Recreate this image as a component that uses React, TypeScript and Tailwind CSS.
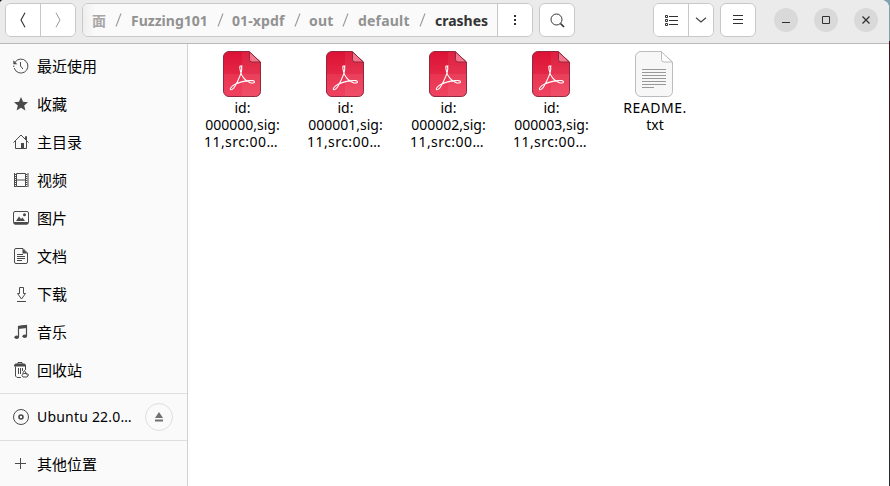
import type { ReactNode } from "react";

const button = "flex items-center justify-center bg-white text-[#3d3d3d]";
const group = "flex h-[34px] shrink-0 overflow-hidden rounded-[6px] border border-[#c8c8c8] bg-white box-border";

function Icon({ children, className = "" }: { children: ReactNode; className?: string }) {
  return (
    <svg viewBox="0 0 16 16" width="16" height="16" fill="none" stroke="#4a4a4a" strokeWidth="1" className={`shrink-0 ${className}`}>
      {children}
    </svg>
  );
}

const places: { label: string; icon: ReactNode }[] = [
  {
    label: "最近使用",
    icon: (
      <>
        <path d="M2.100 4.200A7 7 0 1 1 1.200 10M.8 9V7.600M7.500 4v4l2.400 3" />
        <path d="M.3 2.200v4h4z" fill="#4a4a4a" stroke="none" />
      </>
    ),
  },
  {
    label: "收藏",
    icon: <path d="M8 1l2 4.800 5 .4-3.800 3.300 1.200 5L8 11.800l-4.400 2.700 1.200-5L1 6.200l5-.4z" fill="#4a4a4a" stroke="none" />,
  },
  {
    label: "主目录",
    icon: (
      <>
        <path d="M.5 8.600L8 1l7.500 7.600M2.500 7v7.500H8M10.500 14.500h3V7M12.500 5V2.500h1V6" />
        <path d="M8 9h3v6H8z" fill="#4a4a4a" stroke="none" />
      </>
    ),
  },
  {
    label: "视频",
    icon: (
      <>
        <path d="M3.500 1.500h9v13h-9zM3.500 8h9" />
        <path d="M2.500 2v13M13.500 2v13" strokeWidth="1.500" strokeDasharray="1 1" />
        <path d="M1.500 1v14M15 1v14" />
      </>
    ),
  },
  {
    label: "图片",
    icon: (
      <>
        <rect x=".5" y="1.500" width="15" height="12.500" rx="1.500" />
        <path d="M1 12h14v1.500l-1 1H2l-1-1zM3 11l3-4.500 2 2.500 1.500-1.500L12 11z" fill="#4a4a4a" stroke="none" />
        <circle cx="11.500" cy="4.700" r="1.500" fill="#4a4a4a" stroke="none" />
      </>
    ),
  },
  {
    label: "文档",
    icon: (
      <>
        <path d="M3 .5h7l4.500 4.500v9a1.500 1.500 0 0 1-1.500 1.500H3A1.500 1.500 0 0 1 1.500 14V2A1.500 1.500 0 0 1 3 .5zM4 6.500h6M4 8.500h8M4 10.500h8M4 12.500h5" />
        <path d="M9.500.5l5 5h-5z" fill="#4a4a4a" stroke="none" />
      </>
    ),
  },
  { label: "下载", icon: <path d="M6.500 1.500h4v6h2L8.500 13l-4-5.500h2zM4 15.500h9" /> },
  {
    label: "音乐",
    icon: (
      <>
        <path d="M5.500 13V2.500l8-1V12" strokeWidth="1.200" />
        <path d="M5 2l9-1v3L5 5z" fill="#4a4a4a" stroke="none" />
        <ellipse cx="3.700" cy="13.200" rx="2.300" ry="1.800" fill="#4a4a4a" stroke="none" />
        <ellipse cx="11.700" cy="12.300" rx="2.300" ry="1.800" fill="#4a4a4a" stroke="none" />
      </>
    ),
  },
  {
    label: "回收站",
    icon: (
      <>
        <path d="M2.500 4.500V14l1.500 1.500h4M5.500 6v6M7.500 6v6M9.500 6v3M12.500 4v4M5 2V.5h4V2" />
        <path d="M1 4.500V3l1.500-1.500h9L13 3v1.500z" fill="#4a4a4a" stroke="none" />
        <path d="M9.500 11.500l2-3 3 5M13.500 11.500h-3l-1.500 2 1 1.500h4l1.500-2-1-1.500" />
      </>
    ),
  },
];

const crumbs = [
  { label: "Fuzzing101", box: "w-[77px]", gap: "w-[24px]", text: "tracking-[0px]" },
  { label: "01-xpdf", box: "w-[53px]", gap: "w-[24px]", text: "tracking-[0.1px]" },
  { label: "out", box: "w-[24px]", gap: "w-[25px]", text: "tracking-[0.2px]" },
  { label: "default", box: "w-[52px]", gap: "w-[25px]", text: "tracking-[0.2px]" },
];

function Slash({ width }: { width: string }) {
  return (
    <span className={`flex shrink-0 justify-center ${width}`}>
      <svg width="7" height="14" viewBox="0 0 7 14" stroke="#999" strokeWidth="1.100"><path d="M6 .5L1 13.500" /></svg>
    </span>
  );
}

function PdfIcon() {
  return (
    <svg width="40" height="48" viewBox="0 0 40 48" className="shrink-0">
      <defs>
        <linearGradient id="pdf" x2="0" y2="1"><stop stopColor="#dc1235" /><stop offset=".5" stopColor="#e42645" /><stop offset=".51" stopColor="#e83450" /><stop offset="1" stopColor="#f04361" /></linearGradient>
      </defs>
      <path d="M7 1.500h20L38.500 12v29.500a5 5 0 0 1-5 5H7a5.500 5.500 0 0 1-5.500-5.500V7A5.500 5.500 0 0 1 7 1.500z" fill="url(#pdf)" />
      <path d="M20 1.500h7L38.500 12v29.500a5 5 0 0 1-5 5H20z" fill="#fff" fillOpacity=".06" />
      <path d="M7 1.500h20L38.500 12v29.500a5 5 0 0 1-5 5H7a5.500 5.500 0 0 1-5.500-5.500V7A5.500 5.500 0 0 1 7 1.500z" fill="none" stroke="#90283e" />
      <path d="M27.500 1.800L38.200 12H30a2.500 2.500 0 0 1-2.500-2.500z" fill="#f5768c" stroke="#90283e" />
      <path d="M20.500 16h-2.200c-1 0-.2 3.500.2 5.500.8 4.500 5 9.500 9.200 11 2.500 1 4.800.5 4.800-.5 0-1.500-2.500-1.600-5-1.400-5 .4-11 1.600-15.500 4.300-2.500 1.500-4.200 3.800-3.600 4.600.8 1 3.200-.8 4.700-3.500 2.500-4.500 6.600-13.500 6.700-17.500 0-1.300-.4-2.500-1.300-2.500" fill="none" stroke="white" strokeWidth="1.100" />
    </svg>
  );
}

function TextIcon() {
  return (
    <svg width="40" height="48" viewBox="0 0 40 48" className="shrink-0">
      <path d="M7 1.500h20L38.500 12v29.500a5 5 0 0 1-5 5H7a5.500 5.500 0 0 1-5.500-5.500V7A5.500 5.500 0 0 1 7 1.500z" fill="#f7f7f7" stroke="#bcbcbc" />
      <path d="M27.500 1.800L38.200 12H30a2.500 2.500 0 0 1-2.500-2.500z" fill="#fff" stroke="#bcbcbc" />
      <path d="M8 19.500h24M8 22.500h24M8 25.500h24M8 28.500h24M8 31.500h24M8 34.500h24M8 37.500h12" stroke="#999" />
    </svg>
  );
}

function WindowButton({ children }: { children: ReactNode }) {
  return (
    <div className="flex size-6 items-center justify-center rounded-full bg-[#d9d9d9]">
      <svg width="10" height="10" viewBox="0 0 10 10" fill="none" stroke="#303030" strokeWidth="1">{children}</svg>
    </div>
  );
}

export default function App() {
  return (
    <div className="flex h-[486px] w-[890px] overflow-hidden bg-[linear-gradient(to_right,#151515_20px,#7fa3ad_20px)] font-['Noto_Sans','Noto_Sans_CJK_SC',sans-serif] text-[14px] text-black">
      <div className="flex w-[889px] shrink-0 flex-col overflow-hidden rounded-tl-[4px] rounded-tr-[8px] bg-white">
        <header className="flex h-[44px] shrink-0 items-start border-b border-[#b9b9b9] bg-[#ebebeb] pt-[3px] pl-[5px]">
          <div className={`${group} w-[71px]`}>
            <div className={`${button} w-[35px] border-r border-[#c8c8c8]`}>
              <svg width="6" height="16" viewBox="0 0 6 16" fill="none" stroke="#303030" strokeWidth="1.100"><path d="M5 .8L1 8l4 7.200" /></svg>
            </div>
            <div className={`${button} flex-1`}>
              <svg width="6" height="16" viewBox="0 0 6 16" fill="none" stroke="#999"><path d="M1 .8L5 8l-4 7.200" /></svg>
            </div>
          </div>
          <nav className={`${group} ml-[6px] w-[451px]`}>
            <div className="flex w-[415px] shrink-0 items-center border-r border-[#c8c8c8] bg-gradient-to-r from-[#eee] via-[#fafafa] via-[3%] to-[#fafafa] pl-[9px] text-[14px] font-bold whitespace-nowrap text-[#929292]">
              <span className="w-[14px] overflow-hidden opacity-80">面</span>
              <Slash width="w-[25px]" />
              {crumbs.map((c) => (
                <span key={c.label} className="flex items-center">
                  <span className={`${c.box} ${c.text}`}>{c.label}</span>
                  <Slash width={c.gap} />
                </span>
              ))}
              <span className="text-[#333]">crashes</span>
            </div>
            <div className={`${button} flex-1`}>
              <svg width="4" height="12" viewBox="0 0 4 12" fill="#303030"><path d="M1 1h2v2H1zM1 5h2v2H1zM1 9h2v2H1z" /></svg>
            </div>
          </nav>
          <div className={`${group} ${button} ml-[6px] w-[36px]`}>
            <svg width="15" height="15" viewBox="0 0 15 15" fill="none" stroke="#333"><circle cx="6.500" cy="6.500" r="5.500" /><path d="M10.500 10.500l3.500 3.500" strokeWidth="1.700" /></svg>
          </div>
          <div className={`${group} ml-[78px] w-[61px]`}>
            <div className={`${button} w-[35px] border-r border-[#c8c8c8]`}>
              <svg width="13" height="11" viewBox="0 0 13 11" fill="none" stroke="#303030"><path d="M.5.5h2v2h-2zM.5 4.500h2v2h-2zM.5 8.500h2v2h-2zM4 1.500h9M4 5.500h9M4 9.500h9" /></svg>
            </div>
            <div className={`${button} flex-1`}>
              <svg width="12" height="6" viewBox="0 0 12 6" fill="none" stroke="#444" strokeWidth="1.200"><path d="M1 .8l5 4.200 5-4.200" /></svg>
            </div>
          </div>
          <div className={`${group} ${button} ml-[6px] w-[36px]`}>
            <svg width="10" height="10" viewBox="0 0 10 10" stroke="#303030"><path d="M0 .5h10M0 4.500h10M0 8.500h10" /></svg>
          </div>
          <div className="ml-[18px] flex gap-4 pt-[5px]">
            <WindowButton><path d="M1 7.500h8" /></WindowButton>
            <WindowButton><path d="M1.500 1.500h7v7h-7z" /></WindowButton>
            <WindowButton><path d="M1.500 1.500l7 7M8.500 1.500l-7 7" strokeWidth="1.300" /></WindowButton>
          </div>
        </header>
        <div className="flex min-h-0 flex-1">
          <aside className="flex w-[188px] shrink-0 flex-col border-r border-[#d2d2d2] bg-[#fafafa]">
            <ul className="flex h-[349px] shrink-0 flex-col pt-[3px]">
              {places.map((p) => (
                <li key={p.label} className="flex h-[38px] shrink-0 items-center gap-2 pl-[13px] text-[15px]">
                  <Icon>{p.icon}</Icon>
                  <span>{p.label}</span>
                </li>
              ))}
            </ul>
            <div className="flex h-[47px] shrink-0 items-center border-t border-[#dedede] pl-[13px]">
              <Icon><circle cx="8" cy="8" r="7.500" /><circle cx="8" cy="8" r="2" strokeWidth="1.600" /></Icon>
              <span className="ml-2 w-[100px] pb-[2px] tracking-[0.2px] whitespace-nowrap">Ubuntu 22.0…</span>
              <div className="ml-[8px] flex size-7 items-center justify-center rounded-full border border-[#dedede]">
                <svg width="8" height="10" viewBox="0 0 8 10" fill="#707070"><path d="M4 0l4 6H0zM0 7.500h8v2H0z" /></svg>
              </div>
            </div>
            <div className="flex h-[47px] shrink-0 items-center gap-2 border-t border-[#dedede] pl-[13px] text-[15px]">
              <Icon><path d="M2 7.500h11M7.500 2v11" /></Icon>
              <span>其他位置</span>
            </div>
          </aside>
          <main className="flex flex-1 items-start bg-white pt-[6px] pl-[2px]">
            {["0", "1", "2", "3"].map((n) => (
              <div key={n} className="flex w-[103px] shrink-0 flex-col items-center">
                <PdfIcon />
                <div className="mt-[1px] pl-[2px] text-center leading-[17px] whitespace-nowrap">
                  <div>id:</div>
                  <div>{`00000${n},sig:`}</div>
                  <div className="pr-[3px] tracking-[0.45px]">11,src:00…</div>
                </div>
              </div>
            ))}
            <div className="flex w-[103px] shrink-0 flex-col items-center">
              <TextIcon />
              <div className="mt-[1px] pl-[3px] text-center leading-[17px] whitespace-nowrap">
                <div className="tracking-[0.5px]">README.</div>
                <div>txt</div>
              </div>
            </div>
          </main>
        </div>
      </div>
      <div className="mt-[41px] w-px flex-1 bg-gradient-to-b from-[#460e20] to-[#252a2d]" />
    </div>
  );
}
